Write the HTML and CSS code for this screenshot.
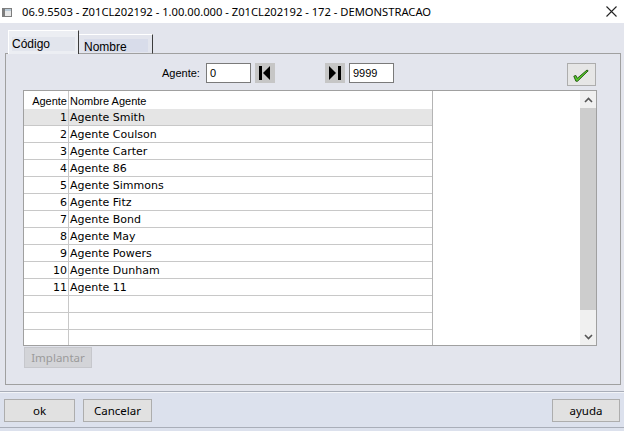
FILE: index.html
```html
<!DOCTYPE html>
<html>
<head>
<meta charset="utf-8">
<link rel="stylesheet" href="styles.css">
</head>
<body>
<div class="titlebar">
  <svg class="title-icon" width="10" height="9" viewBox="0 0 10 9">
    <rect x="0" y="0" width="10" height="9" fill="#7d7d7d"/>
    <rect x="3" y="1" width="6" height="7" fill="#e8e8e8"/>
    <rect x="3" y="1" width="6" height="2" fill="#b9c9d6"/>
  </svg>
  <div class="title-text">06.9.5503 - Z01CL202192 - 1.00.00.000 - Z01CL202192 - 172 - DEMONSTRACAO</div>
  <svg class="close" width="11" height="11" viewBox="0 0 11 11">
    <path d="M0.5 0.5 L10.5 10.5 M10.5 0.5 L0.5 10.5" stroke="#222" stroke-width="1.1"/>
  </svg>
</div>

<div class="main">
  <div class="tabs">
    <div class="tab tab-active"><span class="tab-label">Código</span></div>
    <div class="tab tab-other"><span class="tab-label">Nombre</span></div>
  </div>
  <div class="panel">
    <div class="toolbar">
      <span class="lbl">Agente:</span>
      <div class="field">0</div>
      <div class="navbtn first">
        <svg width="12" height="14" viewBox="0 0 12 14"><rect x="0" y="0" width="3" height="14" fill="#000"/><polygon points="11,0 11,14 4,7" fill="#000"/></svg>
      </div>
      <div class="navbtn last">
        <svg width="12" height="14" viewBox="0 0 12 14"><polygon points="0,0 0,14 7,7" fill="#000"/><rect x="9" y="0" width="3" height="14" fill="#000"/></svg>
      </div>
      <div class="field">9999</div>
      <div class="okbtn">
        <svg class="check" width="16" height="13" viewBox="0 0 16 13">
          <path d="M0.8 7.2 L2.8 6.4 L4.3 9.3 L14 1 L15.2 1.8 L4.6 12.2 L2.9 12.2 Z" fill="#56cc2a" stroke="#1d4d0c" stroke-width="0.9" stroke-linejoin="round"/>
        </svg>
      </div>
    </div>

    <div class="grid">
      <div class="table">
        <div class="row head"><div class="c1">Agente</div><div class="c2">Nombre Agente</div></div>
        <div class="row sel"><div class="c1">1</div><div class="c2">Agente Smith</div></div>
        <div class="row"><div class="c1">2</div><div class="c2">Agente Coulson</div></div>
        <div class="row"><div class="c1">3</div><div class="c2">Agente Carter</div></div>
        <div class="row"><div class="c1">4</div><div class="c2">Agente 86</div></div>
        <div class="row"><div class="c1">5</div><div class="c2">Agente Simmons</div></div>
        <div class="row"><div class="c1">6</div><div class="c2">Agente Fitz</div></div>
        <div class="row"><div class="c1">7</div><div class="c2">Agente Bond</div></div>
        <div class="row"><div class="c1">8</div><div class="c2">Agente May</div></div>
        <div class="row"><div class="c1">9</div><div class="c2">Agente Powers</div></div>
        <div class="row"><div class="c1">10</div><div class="c2">Agente Dunham</div></div>
        <div class="row"><div class="c1">11</div><div class="c2">Agente 11</div></div>
        <div class="row"><div class="c1"></div><div class="c2"></div></div>
        <div class="row"><div class="c1"></div><div class="c2"></div></div>
        <div class="row"><div class="c1"></div><div class="c2"></div></div>
      </div>
      <div class="blank"></div>
      <div class="scrollbar">
        <div class="sb-btn">
          <svg width="9" height="6" viewBox="0 0 9 6"><path d="M1 5 L4.5 1.5 L8 5" fill="none" stroke="#555" stroke-width="1.6"/></svg>
        </div>
        <div class="sb-thumb"></div>
        <div class="sb-track"></div>
        <div class="sb-btn">
          <svg width="9" height="6" viewBox="0 0 9 6"><path d="M1 1 L4.5 4.5 L8 1" fill="none" stroke="#555" stroke-width="1.6"/></svg>
        </div>
      </div>
    </div>

    <div class="implantar">Implantar</div>
  </div>
</div>

<div class="footer">
  <div class="footer-row">
    <div class="btn btn-ok">ok</div>
    <div class="btn btn-cancel">Cancelar</div>
    <div class="btn btn-help">ayuda</div>
  </div>
</div>
</body>
</html>
```

FILE: styles.css
```css
* { box-sizing: border-box; margin: 0; padding: 0; }
html, body { width: 624px; height: 431px; overflow: hidden; }
body {
  font-family: "Liberation Sans", Arial, sans-serif;
  font-size: 11px;
  color: #000;
  background: #e3e5ed;
  display: flex;
  flex-direction: column;
}

/* title bar */
.titlebar {
  height: 23px;
  flex: none;
  background: #fff;
  display: flex;
  align-items: center;
  padding-left: 2px;
  padding-right: 7px;
  font-family: "Noto Sans", "Open Sans", sans-serif;
  font-size: 11.2px;
  color: #000;
}
.title-icon { margin-right: 10px; margin-top: 2px; flex: none; }
.title-text { flex: 1; white-space: nowrap; }
.close { flex: none; }

/* main area */
.main {
  height: 368px;
  flex: none;
  padding: 7px 3px 0 5px;
  display: flex;
  flex-direction: column;
}
.tabs {
  display: flex;
  height: 24px;
  padding-left: 3px;
  position: relative;
  z-index: 1;
  flex: none;
}
.tab {
  font-size: 12px;
  display: flex;
  align-items: flex-start;
}
.tab-active {
  width: 71px;
  height: 24px;
  background: #eceef3;
  border-top: 1px solid #fff;
  border-left: 1px solid #fff;
  border-right: 1px solid #3c3c3c;
  padding: 6px 0 0 3px;
}
.tab-active .tab-label {
  background: #e2e5ed;
  width: 63px;
  height: 14px;
  line-height: 14px;
}
.tab-other {
  width: 74px;
  height: 20px;
  margin-top: 4px;
  border-top: 1px solid #fff;
  border-right: 1px solid #3c3c3c;
  padding: 4px 0 0 5px;
  border-bottom: 1px solid #a0a0a0;
}
.tab-other .tab-label {
  background: #d8dcea;
  width: 64px;
  height: 13px;
  line-height: 16px;
}

.panel {
  margin-top: -1px;
  height: 332px;
  border: 1px solid #a0a0a0;
  display: flex;
  flex-direction: column;
}

.toolbar {
  display: flex;
  align-items: flex-start;
  margin-top: 9px;
  height: 23px;
  padding-left: 156px;
  padding-right: 24px;
  flex: none;
}
.lbl { width: 44px; line-height: 20px; }
.field {
  width: 45px;
  height: 20px;
  background: #fff;
  border: 1px solid #7a7a7a;
  padding-left: 3px;
  line-height: 18px;
}
.navbtn {
  width: 20px;
  height: 20px;
  background: #c6c6c6;
  display: flex;
  align-items: center;
  justify-content: center;
}
.navbtn.first { margin-left: 4px; margin-right: 50px; }
.navbtn.last { margin-right: 4px; }
.okbtn {
  margin-left: auto;
  width: 29px;
  height: 23px;
  background: #e6e6e6;
  border: 1px solid #adadad;
  display: flex;
  align-items: center;
  justify-content: center;
}
.check { margin-top: 2px; margin-right: 1px; }

/* grid */
.grid {
  margin-top: 4px;
  margin-left: 17px;
  width: 574px;
  height: 256px;
  border: 1px solid #a0a0a0;
  background: #fff;
  display: flex;
  overflow: hidden;
  flex: none;
}
.table {
  width: 409px;
  border-right: 1px solid #b4b4b4;
  flex: none;
}
.row {
  display: flex;
  height: 17px;
  border-bottom: 1px solid #c8c8c8;
  font-family: "DejaVu Sans", Verdana, sans-serif;
  font-size: 11px;
  line-height: 16px;
}
.row.head {
  height: 18px;
  border-bottom: none;
  font-family: "Liberation Sans", Arial, sans-serif;
  line-height: 18px;
}
.row.sel { background: #e5e5e5; }
.c1 {
  width: 45px;
  border-right: 1px solid #c8c8c8;
  text-align: right;
  padding: 1px 1px 0 0;
  flex: none;
}
.c2 { flex: 1; padding: 1px 0 0 1px; white-space: nowrap; }
.blank { flex: 1; }
.scrollbar {
  width: 16px;
  flex: none;
  background: #f0f0f0;
  display: flex;
  flex-direction: column;
}
.sb-btn {
  height: 17px;
  display: flex;
  align-items: center;
  justify-content: center;
  flex: none;
}
.sb-thumb { height: 202px; background: #cdcdcd; flex: none; }
.sb-track { flex: 1; }

.implantar {
  margin-top: 1px;
  margin-left: 18px;
  width: 68px;
  height: 21px;
  background: #d3d4d8;
  border: 1px solid #c6c7cc;
  color: #9b9b9b;
  font-family: "Noto Sans", sans-serif;
  font-size: 11.5px;
  line-height: 19px;
  text-align: center;
}

/* footer */
.footer {
  flex: 1;
  background: #dce1ed;
  border-top: 1px solid #a9aeb9;
  box-shadow: inset 0 1px 0 #f2f4f8;
}
.footer-row {
  height: 36px;
  border-bottom: 1px solid #a9aeb9;
  display: flex;
  align-items: flex-start;
  padding: 7px 4px 0 4px;
}
.btn {
  height: 23px;
  background: #e1e1e1;
  border: 1px solid #adadad;
  font-family: "Noto Sans", sans-serif;
  font-size: 11.5px;
  line-height: 21px;
  text-align: center;
}
.btn-ok { width: 71px; }
.btn-cancel { width: 69px; margin-left: 8px; }
.btn-help { width: 68px; margin-left: auto; }
```
